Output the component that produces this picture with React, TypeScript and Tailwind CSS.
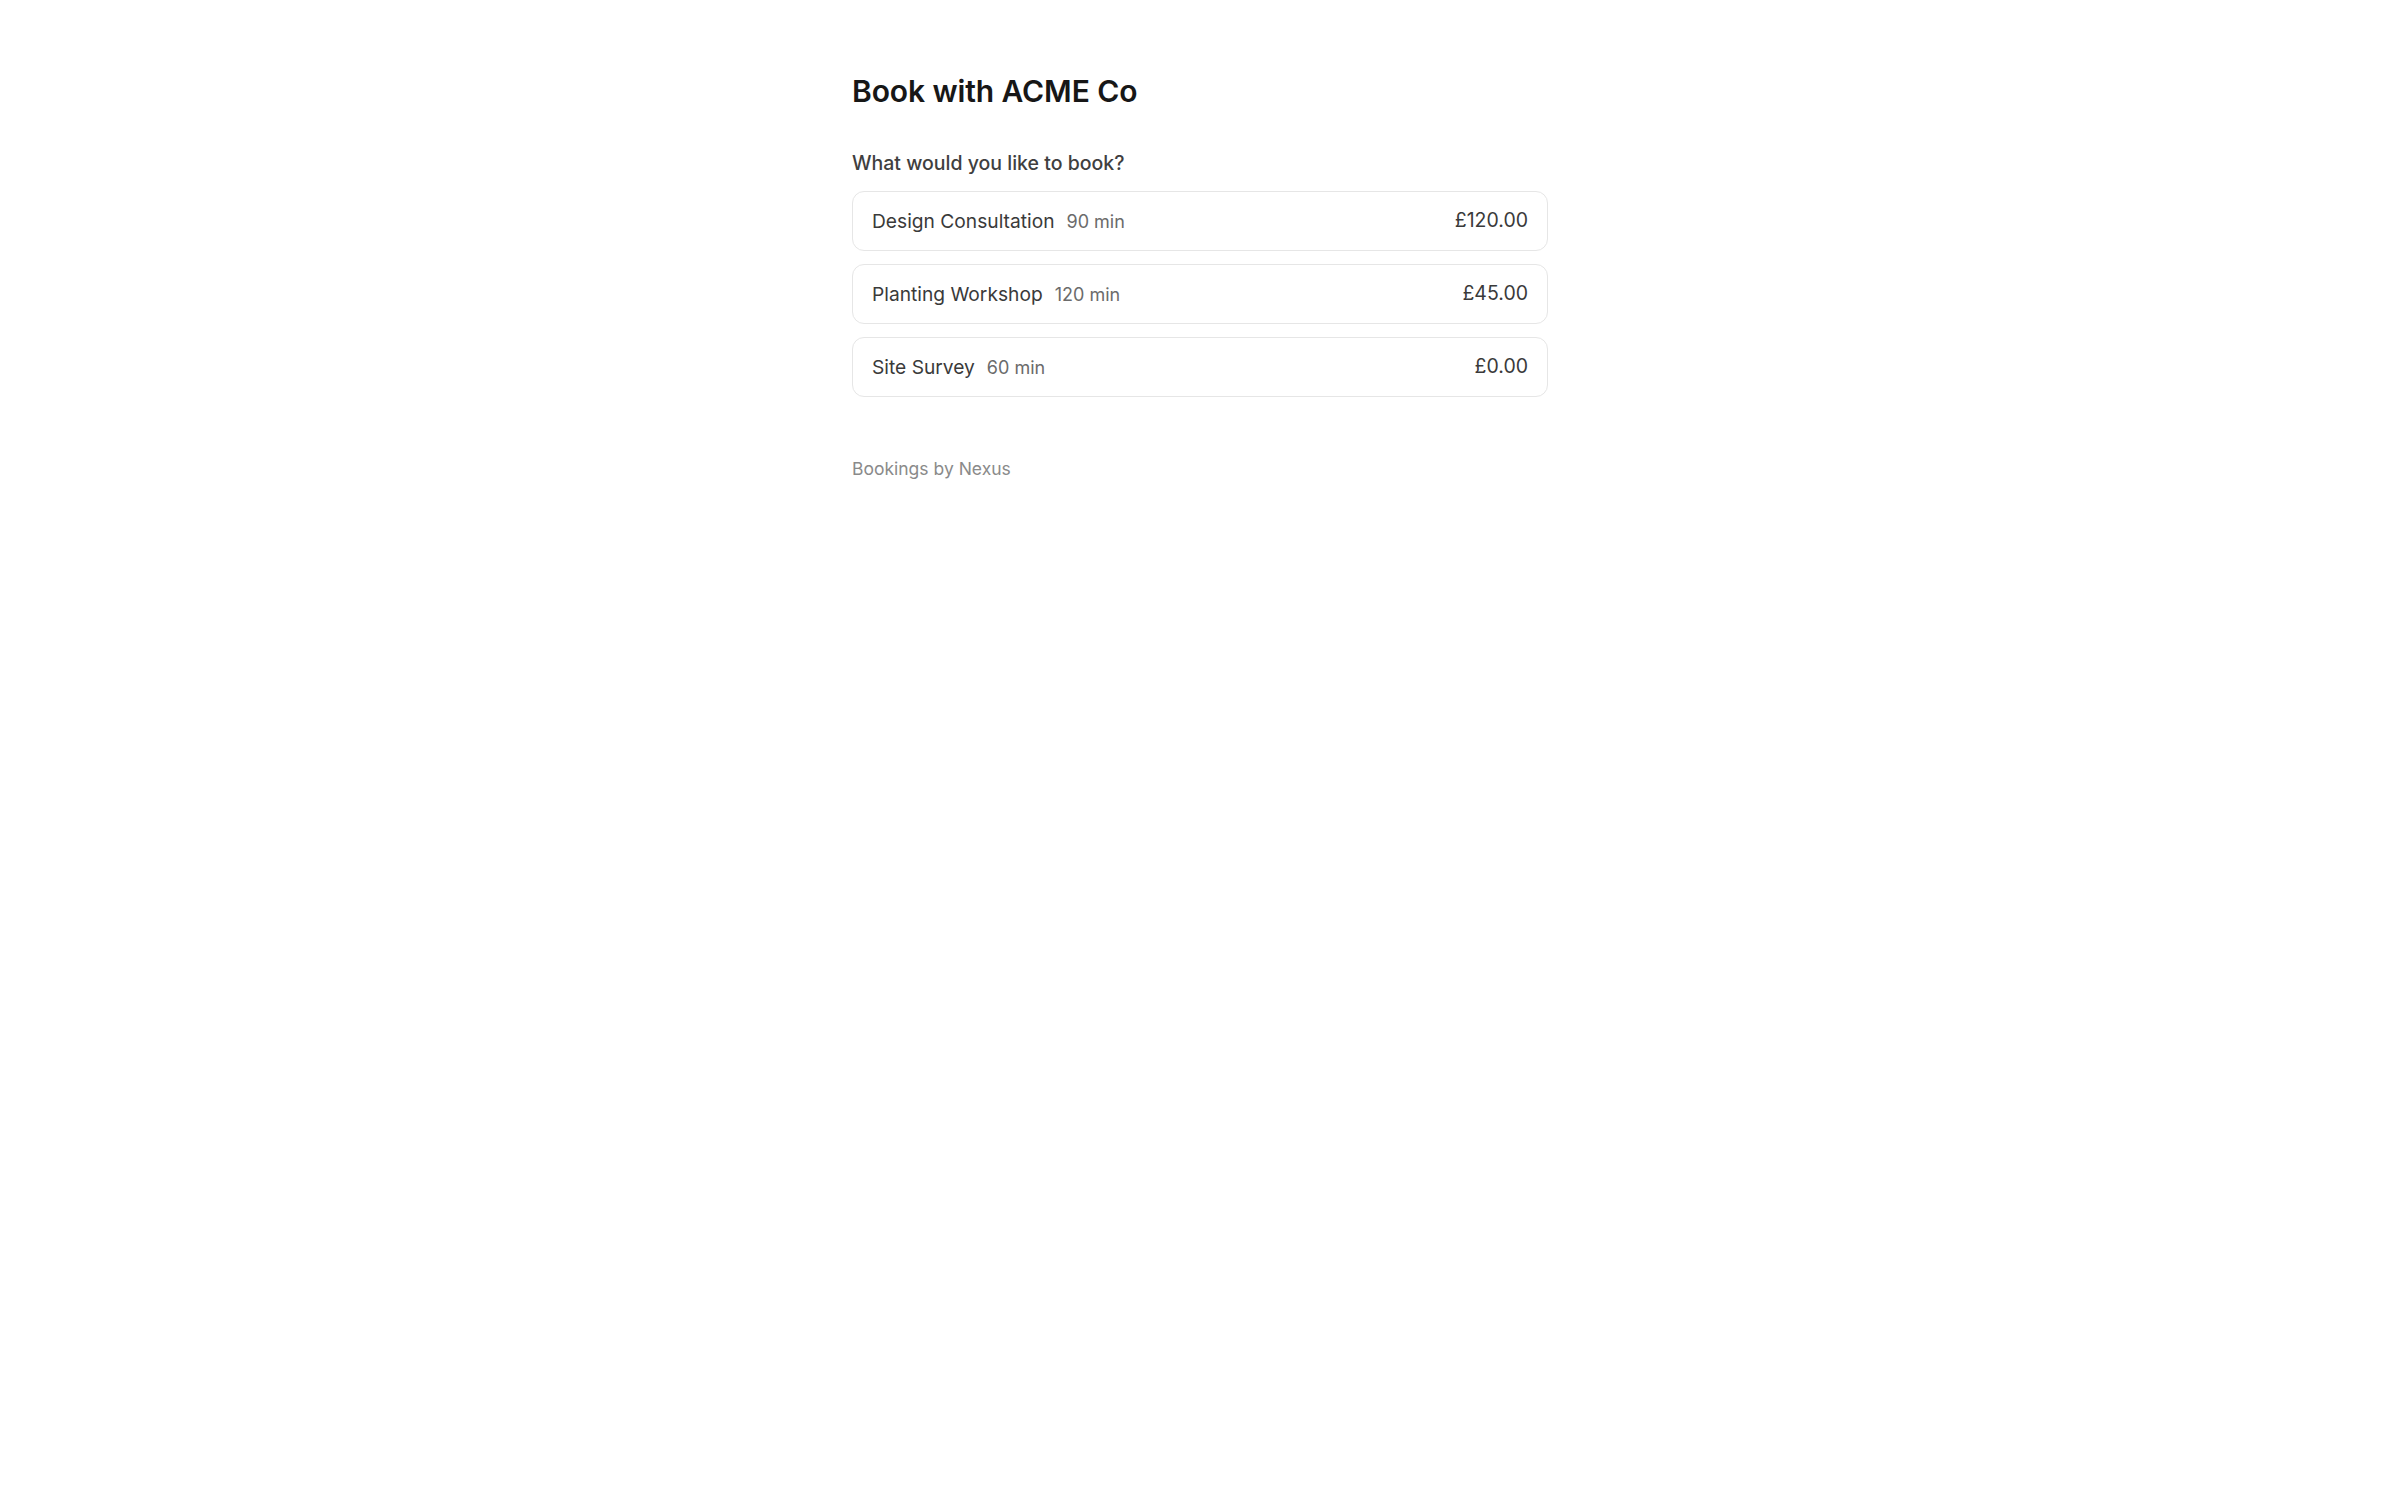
import React from 'react';

interface Service {
  name: string;
  minutes: number;
  price: string;
}

const services: Service[] = [
  { name: 'Design Consultation', minutes: 90, price: '£120.00' },
  { name: 'Planting Workshop', minutes: 120, price: '£45.00' },
  { name: 'Site Survey', minutes: 60, price: '£0.00' },
];

export default function App() {
  return (
    <div
      className="min-h-screen w-full bg-white"
      style={{ fontFamily: 'Inter, "Noto Sans", sans-serif' }}
    >
      <div className="mx-auto w-[696px] pt-[73px]">
        <h1 className="text-[30px] leading-[36px] font-semibold tracking-[-0.1px] text-[#171717]">
          Book with ACME Co
        </h1>

        <p className="mt-[39px] text-[19.5px] leading-[30px] font-medium text-[#3f3f3f]">
          What would you like to book?
        </p>

        <div className="mt-[13px] flex flex-col gap-[13px]">
          {services.map((s) => (
            <button
              key={s.name}
              type="button"
              className="flex h-[60px] w-full items-center justify-between rounded-[12px] border border-[#e6e6e6] bg-white px-[19px] text-left"
            >
              <span className="flex items-baseline">
                <span className="text-[19.2px] text-[#3a3a3a]">{s.name}</span>
                <span className="ml-[12px] text-[18px] text-[#6b6b6b]">{s.minutes} min</span>
              </span>
              <span className="text-[19.5px] text-[#3a3a3a]">{s.price}</span>
            </button>
          ))}
        </div>

        <p className="mt-[60px] text-[17.5px] leading-[24px] text-[#8a8a8a]">Bookings by Nexus</p>
      </div>
    </div>
  );
}
